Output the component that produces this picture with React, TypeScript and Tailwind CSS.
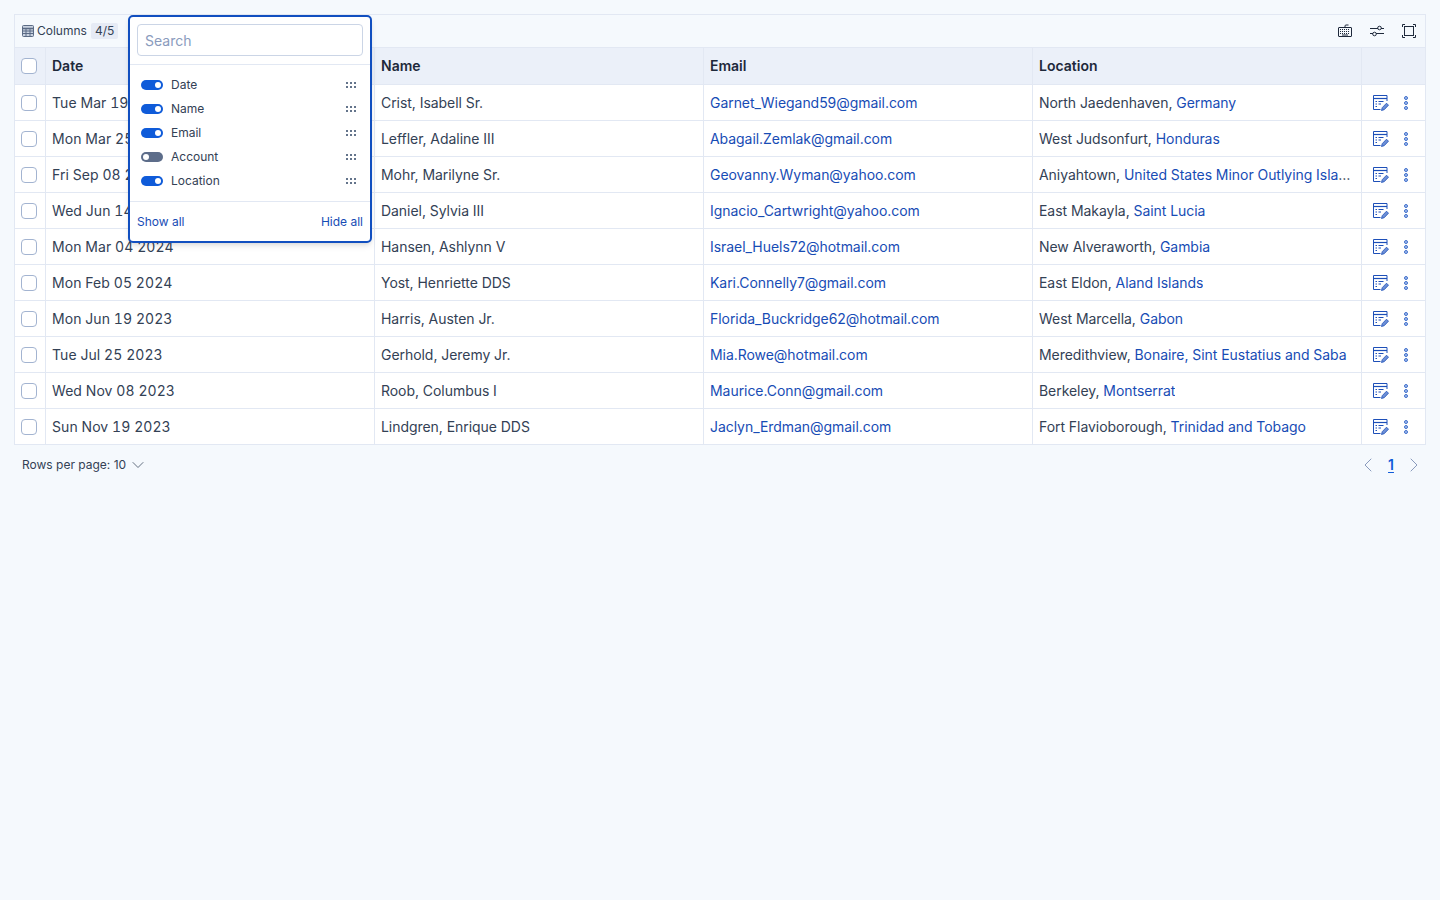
import { ChevronDown, ChevronLeft, ChevronRight } from 'lucide-react';

const rows = [
  { date: 'Tue Mar 19 2024', name: 'Crist, Isabell Sr.', email: 'Garnet_Wiegand59@gmail.com', city: 'North Jaedenhaven', country: 'Germany' },
  { date: 'Mon Mar 25 2024', name: 'Leffler, Adaline III', email: 'Abagail.Zemlak@gmail.com', city: 'West Judsonfurt', country: 'Honduras' },
  { date: 'Fri Sep 08 2023', name: 'Mohr, Marilyne Sr.', email: 'Geovanny.Wyman@yahoo.com', city: 'Aniyahtown', country: 'United States Minor Outlying Islands' },
  { date: 'Wed Jun 14 2023', name: 'Daniel, Sylvia III', email: 'Ignacio_Cartwright@yahoo.com', city: 'East Makayla', country: 'Saint Lucia' },
  { date: 'Mon Mar 04 2024', name: 'Hansen, Ashlynn V', email: 'Israel_Huels72@hotmail.com', city: 'New Alveraworth', country: 'Gambia' },
  { date: 'Mon Feb 05 2024', name: 'Yost, Henriette DDS', email: 'Kari.Connelly7@gmail.com', city: 'East Eldon', country: 'Aland Islands' },
  { date: 'Mon Jun 19 2023', name: 'Harris, Austen Jr.', email: 'Florida_Buckridge62@hotmail.com', city: 'West Marcella', country: 'Gabon' },
  { date: 'Tue Jul 25 2023', name: 'Gerhold, Jeremy Jr.', email: 'Mia.Rowe@hotmail.com', city: 'Meredithview', country: 'Bonaire, Sint Eustatius and Saba' },
  { date: 'Wed Nov 08 2023', name: 'Roob, Columbus I', email: 'Maurice.Conn@gmail.com', city: 'Berkeley', country: 'Montserrat' },
  { date: 'Sun Nov 19 2023', name: 'Lindgren, Enrique DDS', email: 'Jaclyn_Erdman@gmail.com', city: 'Fort Flavioborough', country: 'Trinidad and Tobago' },
];

const columns = [
  { label: 'Date', on: true },
  { label: 'Name', on: true },
  { label: 'Email', on: true },
  { label: 'Account', on: false },
  { label: 'Location', on: true },
];

function Checkbox() {
  return <div className="w-4 h-4 mr-[2px] rounded-[4px] border border-[#a3b4d1] bg-white" />;
}

function TableIcon() {
  return (
    <svg width="12" height="12" viewBox="0 0 12 12" fill="none" stroke="#5b6b85" strokeWidth="1">
      <rect x="0.5" y="0.5" width="11" height="11" rx="1" fill="#c9d2e0" />
      <path d="M0.5 3.5h11" strokeWidth="1.500" />
      <path d="M0.5 6h11M0.5 8.500h11M4 3.500v8M8 3.500v8" />
    </svg>
  );
}

function KeyboardIcon() {
  return (
    <svg width="16" height="14" viewBox="0 0 16 14" fill="none" stroke="#1e293b" strokeWidth="1">
      <rect x="1.500" y="3.500" width="13" height="9" rx="0.500" />
      <path d="M8 3.500V2a1 1 0 0 1 1-1h2.500" />
      <path d="M3 5.500h10M3 7.500h10M3 9.500h10" strokeDasharray="1 1" />
      <path d="M5 11h6" />
    </svg>
  );
}

function SlidersIcon() {
  return (
    <svg width="16" height="14" viewBox="0 0 16 14" fill="none" stroke="#1e293b" strokeWidth="1">
      <path d="M1 4.500h8M12 4.500h3M1 9.500h3M7 9.500h8" />
      <circle cx="10.500" cy="4" r="1.800" />
      <circle cx="5.500" cy="10" r="1.800" />
    </svg>
  );
}

function FullscreenIcon() {
  return (
    <svg width="16" height="14" viewBox="0 0 16 14" fill="none" stroke="#1e293b" strokeWidth="1">
      <rect x="3.500" y="2.500" width="9" height="9" />
      <path d="M1.500 3V0.500h2.500M12 0.500h2.500V3M14.500 11v2.500H12M4 13.500H1.500V11" />
    </svg>
  );
}

function EditRowIcon() {
  return (
    <svg width="16" height="16" viewBox="0 0 16 16" fill="none" stroke="#1d4fb8" strokeWidth="1">
      <path d="M7.500 14.500H0.500V0.500h13.500V6" />
      <path d="M0.500 3.500h13.500" strokeWidth="1.200" />
      <path d="M2.500 6.500h1.500M5.500 6.500h5M2.500 9h1.500M5.500 9h2.500M2.500 11.500h1.500" />
      <path d="M8.500 15.500l0.700-2.800 4.300-4.500 2 2-4.300 4.500z" fill="#6d8fd6" strokeWidth="0.800" />
    </svg>
  );
}

function DotsIcon() {
  return (
    <svg width="6" height="14" viewBox="0 0 6 14" fill="#a9c0ee" stroke="#3f6fcb" strokeWidth="1">
      <circle cx="3" cy="2" r="1.500" />
      <circle cx="3" cy="7" r="1.500" />
      <circle cx="3" cy="12" r="1.500" />
    </svg>
  );
}

function DragIcon() {
  return (
    <div className="grid grid-cols-3 gap-x-[2px] gap-y-[2px] w-[10px]">
      {[0, 1, 2, 3, 4, 5].map((i) => (
        <div key={i} className="w-[2px] h-[2px] bg-[#64748b]" />
      ))}
    </div>
  );
}

function Toggle({ on }: { on: boolean }) {
  return on ? (
    <div className="w-[22px] h-[10px] rounded-full bg-[#0f5bd9] flex items-center justify-end pr-[2px]">
      <div className="w-[6px] h-[6px] rounded-full bg-white" />
    </div>
  ) : (
    <div className="w-[22px] h-[10px] rounded-full bg-[#5d6d8a] flex items-center pl-[2px]">
      <div className="w-[6px] h-[6px] rounded-full bg-white" />
    </div>
  );
}

const rowGrid = 'grid grid-cols-[31px_329px_329px_329px_329px_63px]';
const cell = 'border-r border-[#e2e8f3] px-[6px] flex items-center min-w-0';

export default function App() {
  return (
    <div className="min-h-[900px] bg-[#f5f9fd] p-[14px] text-[14px] text-[#334155] font-['Inter',sans-serif] relative">
      <div className="border border-[#e2e8f3] bg-white tracking-[-0.05px]">
        <div className="h-[32px] bg-[#f5f9fd] flex items-center justify-between pl-[7px] pr-[8px] tracking-normal">
          <div className="flex items-center text-[12px] text-[#334155]">
            <TableIcon />
            <span className="ml-[3px]">Columns</span>
            <span className="ml-[4px] bg-[#e6ebf5] rounded-[2px] px-[4px] h-[16px] flex items-center">4/5</span>
          </div>
          <div className="flex items-center gap-[16px]">
            <KeyboardIcon />
            <SlidersIcon />
            <FullscreenIcon />
          </div>
        </div>

        <div className={`${rowGrid} h-[37px] bg-[#ebf0f9] border-t border-[#e2e8f3] font-semibold text-[#1e293b] tracking-normal`}>
          <div className={`${cell} justify-center px-0`}><Checkbox /></div>
          <div className={`${cell} pb-[1px]`}>Date</div>
          <div className={`${cell} pb-[1px]`}>Name</div>
          <div className={`${cell} pb-[1px]`}>Email</div>
          <div className={`${cell} pb-[1px]`}>Location</div>
          <div className="" />
        </div>

        {rows.map((row) => (
          <div key={row.email} className={`${rowGrid} h-[36px] border-t border-[#e2e8f3] bg-white`}>
            <div className={`${cell} justify-center px-0`}><Checkbox /></div>
            <div className={`${cell} tabular-nums tracking-[0.06px]`}>{row.date}</div>
            <div className={cell}>{row.name}</div>
            <div className={`${cell} text-[#174cb5]`}>{row.email}</div>
            <div className={cell}>
              <span className="truncate">
                {row.city}, <span className="text-[#174cb5]">{row.country}</span>
              </span>
            </div>
            <div className="flex items-center pl-[11px] gap-[14px]">
              <EditRowIcon />
              <DotsIcon />
            </div>
          </div>
        ))}
      </div>

      <div className="h-[40px] flex items-center justify-between pl-[8px] text-[12px] text-[#334155]">
        <div className="flex items-center">
          <span>Rows per page: 10</span>
          <ChevronDown className="w-[20px] h-[20px] ml-[2px] text-[#475569]" strokeWidth={1} />
        </div>
        <div className="flex items-center">
          <ChevronLeft className="w-[24px] h-[24px] text-[#8a9bbd]" strokeWidth={1} />
          <span className="w-[22px] mb-[2px] text-center text-[14px] font-semibold text-[#0f5bd9] underline underline-offset-2">1</span>
          <ChevronRight className="w-[24px] h-[24px] text-[#8a9bbd]" strokeWidth={1} />
        </div>
      </div>

      <div className="absolute left-[128px] top-[15px] w-[244px] h-[228px] bg-white border-2 border-[#114fc0] rounded-[5px] shadow-md flex flex-col">
        <div className="h-[48px] px-[7px] pt-[7px] border-b border-[#e2e8f3]">
          <div className="h-[32px] border border-[#cbd5e6] rounded-[4px] flex items-center px-[7px] text-[14px] text-[#8a9bbd]">Search</div>
        </div>
        <div className="flex-1 pl-[11px] pr-[14px] pt-[8px] flex flex-col">
          {columns.map((col) => (
            <div key={col.label} className="h-[24px] flex items-center text-[12px] text-[#334155]">
              <Toggle on={col.on} />
              <span className="ml-[8px] flex-1">{col.label}</span>
              <DragIcon />
            </div>
          ))}
        </div>
        <div className="h-[40px] border-t border-[#e2e8f3] px-[7px] flex items-center justify-between text-[12px] text-[#174cb5]">
          <span>Show all</span>
          <span>Hide all</span>
        </div>
      </div>
    </div>
  );
}
